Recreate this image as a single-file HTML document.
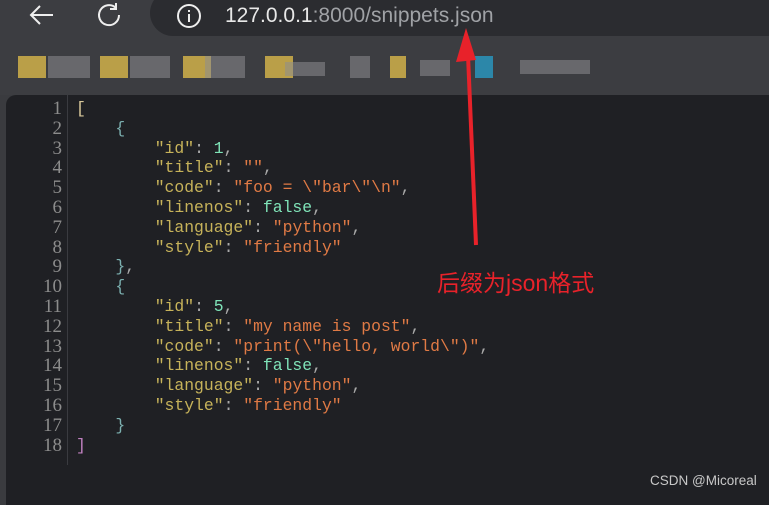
<!DOCTYPE html>
<html><head><meta charset="utf-8"><style>
body{margin:0;width:769px;height:498px;overflow:hidden;background:#3a3b3f;font-family:"Liberation Sans",sans-serif;position:relative}
.top{position:absolute;left:0;top:0;width:769px;height:95px;background:#3c3d41}
.addr{position:absolute;left:150px;top:-10px;width:640px;height:46px;border-radius:23px;background:#2b2c30}
.url{position:absolute;left:225px;top:4px;font-size:21px;color:#e8e8e8}
.url span{color:#a0a2a6}
.blur{position:absolute;top:56px;height:22px;background:#8c8c90;opacity:.55}
.y{position:absolute;top:56px;width:28px;height:22px;background:#d9b84a;opacity:.8}
.ed{position:absolute;left:6px;top:95px;width:770px;height:410px;background:#1f2024;border-top-left-radius:10px}
.gut{position:absolute;left:67px;top:95px;width:1px;height:370px;background:#3a3b40}
pre{margin:0;position:absolute;top:99px;font-family:"Liberation Mono","DejaVu Sans Mono",monospace;font-size:16.4px;line-height:19.8px}
.ln{left:20px;width:42px;text-align:right;color:#8c8c8c;font-family:"Liberation Serif",serif;font-size:19px}
.code{left:76px;color:#a9a9a9}
.k{color:#c7b35a}.s{color:#e07a45}.n{color:#7fe3b8}.b{color:#d8c89a}.c{color:#7cb0b0}
.note{position:absolute;left:437px;top:264px;color:#e8222a;font-size:23px;font-family:"Liberation Sans","Noto Sans CJK SC",sans-serif}
.wm{position:absolute;left:650px;top:473px;color:#c8c8c8;font-size:13.5px}
</style></head><body>
<div class="top"></div>
<div class="addr"></div>
<svg style="position:absolute;left:28px;top:3px" width="28" height="24" viewBox="0 0 28 24"><path d="M25 12H4M12 3L3 12l9 9" stroke="#eee" stroke-width="2" fill="none"/></svg>
<svg style="position:absolute;left:95px;top:2px" width="28" height="26" viewBox="0 0 28 26"><path d="M21 6A10 10 0 1 0 24 13M21 1v6h-6" stroke="#eee" stroke-width="2" fill="none"/></svg>
<svg style="position:absolute;left:176px;top:3px" width="26" height="26" viewBox="0 0 26 26"><circle cx="13" cy="13" r="11" stroke="#eee" stroke-width="2" fill="none"/><path d="M13 11v8M13 7v2" stroke="#eee" stroke-width="2"/></svg>
<div class="url">127.0.0.1<span>:8000/snippets.json</span></div>
<div class="y" style="left:18px"></div><div class="blur" style="left:48px;width:42px"></div>
<div class="y" style="left:100px"></div><div class="blur" style="left:130px;width:40px"></div>
<div class="y" style="left:183px"></div><div class="blur" style="left:205px;width:40px"></div>
<div class="y" style="left:265px"></div><div class="blur" style="left:285px;width:40px;top:62px;height:14px"></div>
<div class="blur" style="left:350px;width:20px"></div><div class="blur" style="left:420px;width:30px;top:60px;height:16px"></div>
<div class="y" style="left:390px;width:16px"></div>
<div class="blur" style="left:475px;width:18px;background:#2a8fb5;opacity:.9"></div>
<div class="blur" style="left:520px;width:70px;top:60px;height:14px"></div>
<div class="ed"></div><div class="gut"></div>
<pre class="ln">1
2
3
4
5
6
7
8
9
10
11
12
13
14
15
16
17
18</pre>
<pre class="code"><span class="b">[</span>
    <span class="c">{</span>
        <span class="k">"id"</span>: <span class="n">1</span>,
        <span class="k">"title"</span>: <span class="s">""</span>,
        <span class="k">"code"</span>: <span class="s">"foo = \"bar\"\n"</span>,
        <span class="k">"linenos"</span>: <span class="n">false</span>,
        <span class="k">"language"</span>: <span class="s">"python"</span>,
        <span class="k">"style"</span>: <span class="s">"friendly"</span>
    <span class="c">}</span>,
    <span class="c">{</span>
        <span class="k">"id"</span>: <span class="n">5</span>,
        <span class="k">"title"</span>: <span class="s">"my name is post"</span>,
        <span class="k">"code"</span>: <span class="s">"print(\"hello, world\")"</span>,
        <span class="k">"linenos"</span>: <span class="n">false</span>,
        <span class="k">"language"</span>: <span class="s">"python"</span>,
        <span class="k">"style"</span>: <span class="s">"friendly"</span>
    <span class="c">}</span>
<span class="b" style="color:#c080c0">]</span></pre>
<svg style="position:absolute;left:0;top:0" width="769" height="498"><path d="M476 245L468 55" stroke="#e8222a" stroke-width="4"/><path d="M466 28L456 62L476 60Z" fill="#e8222a"/></svg>
<div class="note">后缀为json格式</div>
<div class="wm">CSDN @Micoreal</div>
</body></html>
